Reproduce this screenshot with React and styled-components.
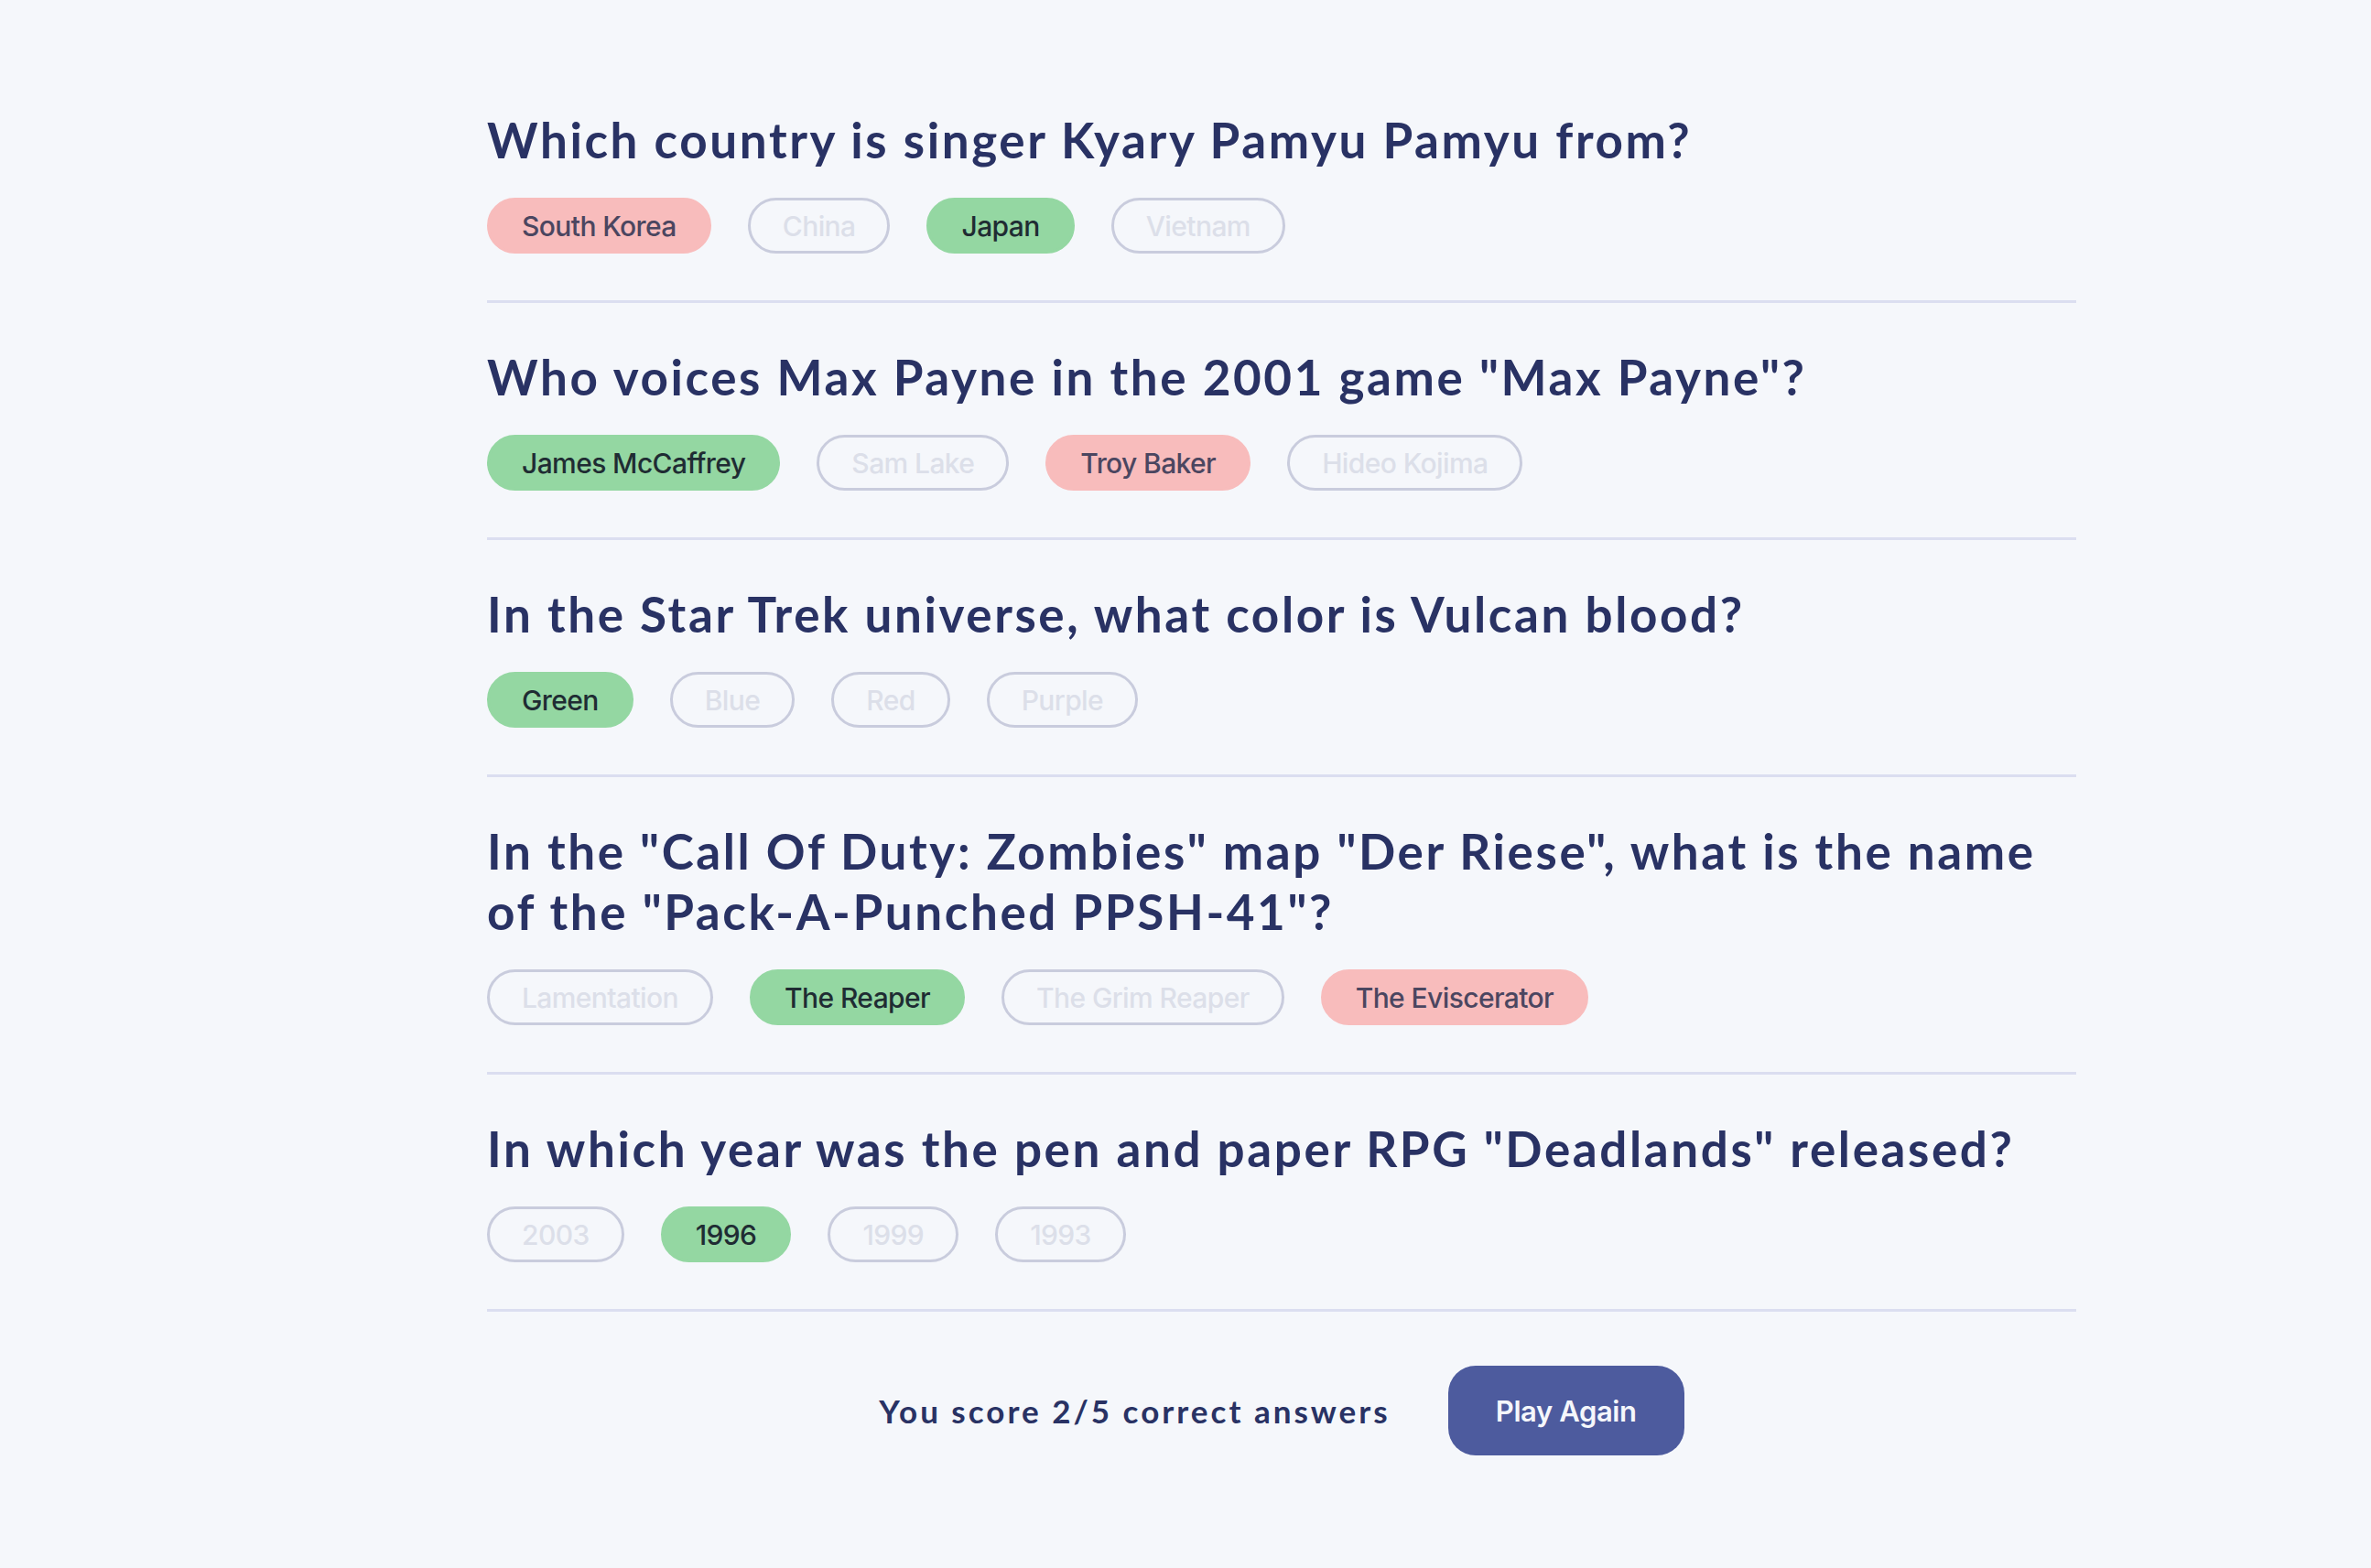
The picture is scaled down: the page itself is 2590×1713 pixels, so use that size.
import React from "react";
import styled, { createGlobalStyle } from "styled-components";

const Global = createGlobalStyle`
  html, body { margin: 0; padding: 0; background: #F5F7FB; }
  body { font-family: "Inter", "Liberation Sans", sans-serif; }
  #root { min-height: 100vh; }
`;

const Page = styled.div`
  min-height: 1713px;
  background: #F5F7FB;
  box-sizing: border-box;
  padding: 72px 0 0 532px;
`;

const Main = styled.main`
  width: 1736px;
  display: flex;
  flex-direction: column;
`;

const Block = styled.section`
  padding: 48px 0 51px;
  border-bottom: 3px solid #DBDEF0;
`;

const Title = styled.h2`
  margin: 0;
  max-width: 1720px;
  font-family: "Lato", "Liberation Sans", sans-serif;
  font-weight: 700;
  font-size: 53px;
  line-height: 66px;
  color: #293264;
  letter-spacing: 2.6px;
`;

const Answers = styled.div`
  display: flex;
  gap: 40px;
  margin-top: 30px;
`;

const variants = {
  correct: { bg: "#94D7A2", border: "#94D7A2", color: "#1f2c33" },
  wrong: { bg: "#F8BCBC", border: "#F8BCBC", color: "#4b4660" },
  idle: { bg: "transparent", border: "#C9CCDD", color: "#DCDFE9" },
};

const Pill = styled.div`
  box-sizing: border-box;
  height: 61px;
  padding: 0 35px;
  display: flex;
  align-items: center;
  border-radius: 999px;
  border: 3px solid ${(p) => variants[p.$state].border};
  background: ${(p) => variants[p.$state].bg};
  color: ${(p) => variants[p.$state].color};
  font-family: "Inter", "Liberation Sans", sans-serif;
  font-weight: 500;
  font-size: 30px;
  letter-spacing: -0.6px;
  white-space: nowrap;
`;

const Footer = styled.footer`
  display: flex;
  justify-content: center;
  align-items: center;
  gap: 63px;
  padding-top: 59px;
`;

const Score = styled.p`
  margin: 0;
  font-family: "Lato", "Liberation Sans", sans-serif;
  font-weight: 700;
  font-size: 35px;
  color: #293264;
  letter-spacing: 3px;
`;

const Button = styled.button`
  box-sizing: border-box;
  width: 258px;
  height: 98px;
  border: none;
  border-radius: 30px;
  background: #4D5B9E;
  color: #F5F7FB;
  font-family: "Inter", "Liberation Sans", sans-serif;
  font-weight: 600;
  font-size: 31px;
  letter-spacing: -0.4px;
  cursor: pointer;
`;

const questions = [
  {
    q: "Which country is singer Kyary Pamyu Pamyu from?",
    a: [
      ["South Korea", "wrong"],
      ["China", "idle"],
      ["Japan", "correct"],
      ["Vietnam", "idle"],
    ],
  },
  {
    q: 'Who voices Max Payne in the 2001 game "Max Payne"?',
    a: [
      ["James McCaffrey", "correct"],
      ["Sam Lake", "idle"],
      ["Troy Baker", "wrong"],
      ["Hideo Kojima", "idle"],
    ],
  },
  {
    q: "In the Star Trek universe, what color is Vulcan blood?",
    a: [
      ["Green", "correct"],
      ["Blue", "idle"],
      ["Red", "idle"],
      ["Purple", "idle"],
    ],
  },
  {
    q: 'In the "Call Of Duty: Zombies" map "Der Riese", what is the name of the "Pack-A-Punched PPSH-41"?',
    a: [
      ["Lamentation", "idle"],
      ["The Reaper", "correct"],
      ["The Grim Reaper", "idle"],
      ["The Eviscerator", "wrong"],
    ],
  },
  {
    q: 'In which year was the pen and paper RPG "Deadlands" released?',
    a: [
      ["2003", "idle"],
      ["1996", "correct"],
      ["1999", "idle"],
      ["1993", "idle"],
    ],
  },
];

export default function App() {
  return (
    <>
      <Global />
      <Page>
        <Main>
          {questions.map((item) => (
            <Block key={item.q}>
              <Title>{item.q}</Title>
              <Answers>
                {item.a.map(([text, state]) => (
                  <Pill key={text} $state={state}>
                    {text}
                  </Pill>
                ))}
              </Answers>
            </Block>
          ))}
          <Footer>
            <Score>You score 2/5 correct answers</Score>
            <Button>Play Again</Button>
          </Footer>
        </Main>
      </Page>
    </>
  );
}
